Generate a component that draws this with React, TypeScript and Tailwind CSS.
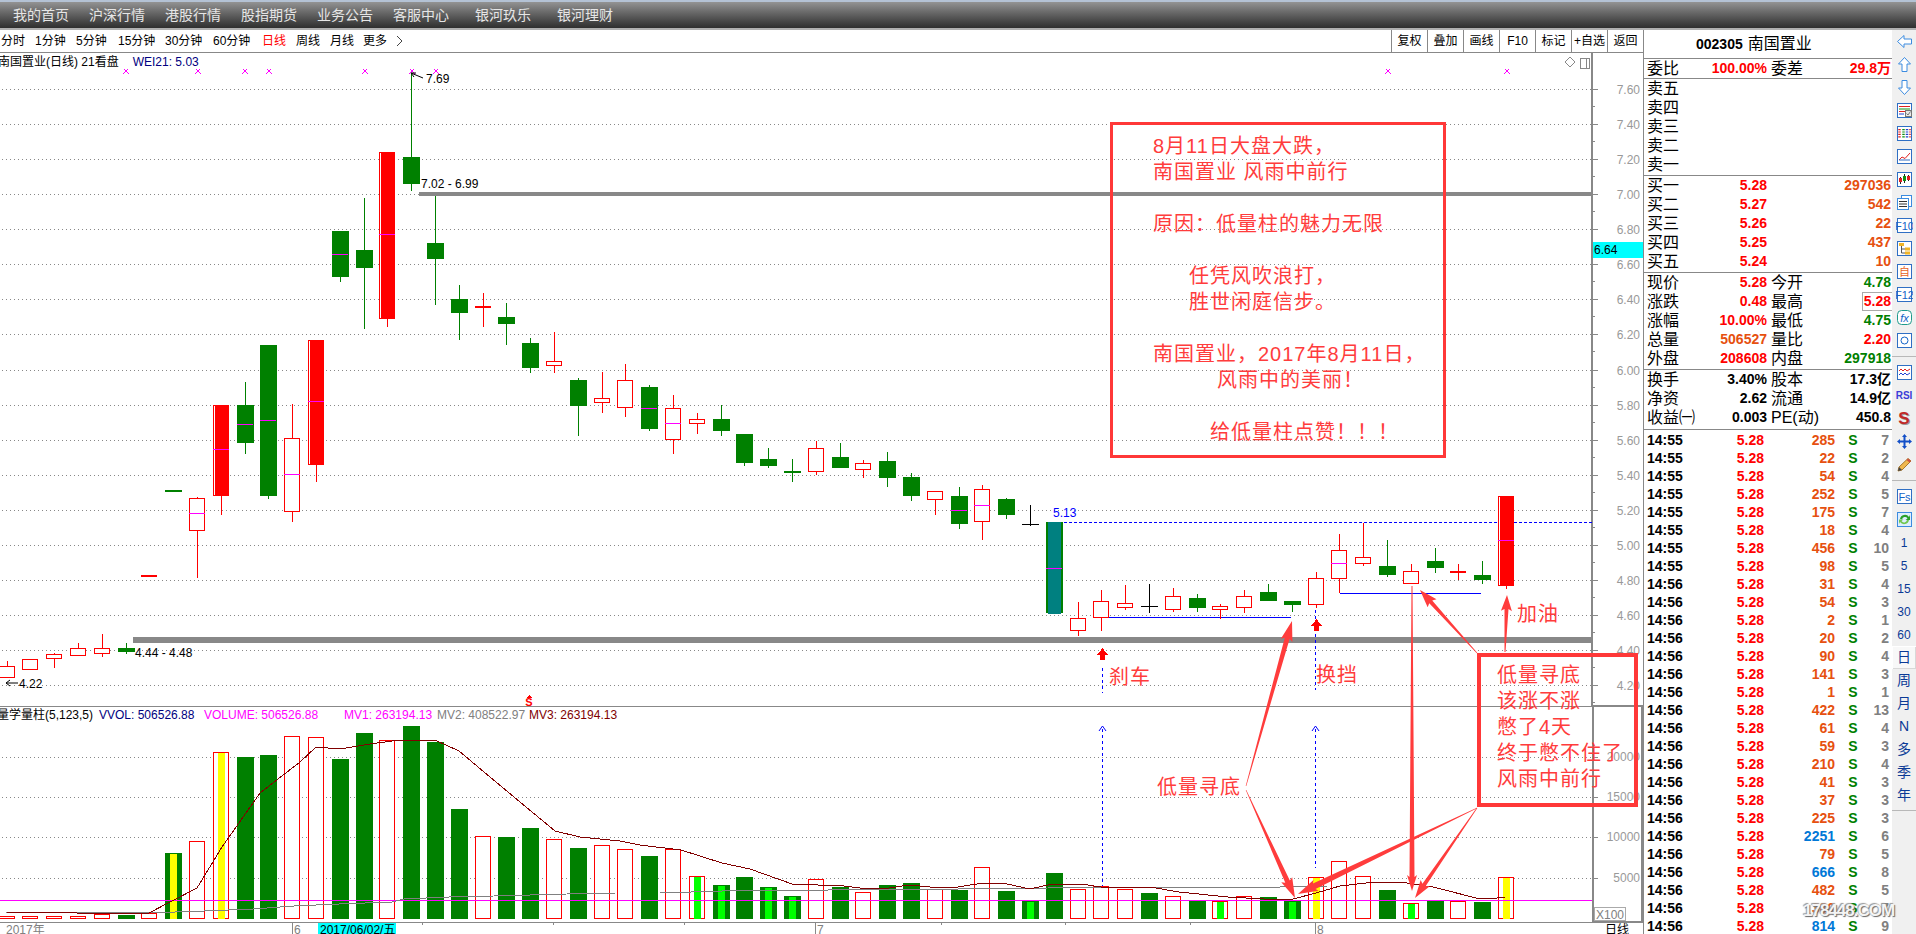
import type { ReactNode } from "react"

const RED = "#ff0000"
const GREEN = "#008000"
const NOTE = "#ff3c3c"
const STEP = 23.8

// full width punctuation of the notes
const COMMA = "\uFF0C"
const COLON = "\uFF1A"
const BANG = "\uFF01"

const centerX = (i: number) => Math.round(6.5 + STEP * i)

// type, wick top, body top, body bottom, wick bottom, magenta mid line
type Candle = [string, number, number, number, number, number?]

const candles: Candle[] = [
  ["r", 661, 666, 677, 677],
  ["r", 659, 659, 669, 670],
  ["r", 653, 654, 658, 668],
  ["r", 643, 648, 655, 656],
  ["r", 634, 648, 653, 657],
  ["g", 643, 648, 652, 654],
  ["r", 575, 575, 575, 575],
  ["g", 491, 490, 491, 491],
  ["r", 497, 498, 530, 578, 513],
  ["R", 405, 405, 495, 515, 449],
  ["g", 382, 405, 443, 454, 424],
  ["g", 345, 345, 496, 499, 420],
  ["r", 404, 438, 511, 522, 474],
  ["R", 340, 340, 464, 482, 401],
  ["g", 231, 231, 277, 282, 254],
  ["g", 198, 250, 268, 329],
  ["R", 152, 152, 318, 327, 234],
  ["g", 73, 157, 184, 191],
  ["g", 196, 243, 259, 305],
  ["g", 285, 299, 313, 340],
  ["r", 293, 306, 306, 327],
  ["g", 303, 317, 324, 345],
  ["g", 338, 343, 368, 373],
  ["r", 332, 361, 365, 373],
  ["g", 378, 380, 406, 436],
  ["r", 372, 398, 402, 413],
  ["r", 364, 380, 407, 417],
  ["g", 385, 387, 429, 431, 408],
  ["r", 395, 408, 439, 454, 423],
  ["r", 413, 419, 423, 434],
  ["g", 405, 419, 431, 436],
  ["g", 434, 434, 463, 466],
  ["g", 448, 459, 466, 468],
  ["g", 459, 471, 473, 482],
  ["r", 441, 448, 471, 475],
  ["g", 443, 457, 468, 468],
  ["r", 460, 463, 469, 478],
  ["g", 452, 461, 478, 487],
  ["g", 473, 477, 496, 501],
  ["r", 491, 491, 499, 515],
  ["g", 487, 496, 524, 529, 510],
  ["r", 485, 489, 521, 540, 505],
  ["g", 498, 499, 515, 519],
  ["b", 505, 524, 524, 526],
  ["t", 522, 522, 613, 613, 568],
  ["r", 602, 618, 630, 636],
  ["r", 590, 601, 617, 631],
  ["r", 585, 603, 607, 610],
  ["b", 584, 606, 606, 613],
  ["r", 588, 596, 609, 612],
  ["g", 594, 598, 608, 612],
  ["r", 604, 606, 609, 619],
  ["r", 590, 596, 607, 613],
  ["g", 584, 592, 601, 601],
  ["g", 601, 601, 605, 612],
  ["r", 572, 578, 604, 608],
  ["r", 534, 550, 578, 593, 563],
  ["r", 523, 557, 563, 566],
  ["g", 540, 566, 575, 577],
  ["r", 564, 571, 583, 584],
  ["g", 548, 561, 568, 573],
  ["r", 564, 571, 571, 580],
  ["g", 561, 575, 580, 584],
  ["R", 496, 496, 585, 589, 540],
]

// type (r hollow, g green), top of the bar, colour of the inner stripe
type Bar = [string, number, string?]

const bars: Bar[] = [
  ["r", 916], ["r", 916], ["r", 916], ["r", 916], ["r", 914], ["g", 915],
  ["r", 913], ["g", 853, "#ffff00"], ["r", 841], ["r", 752, "#ffff00"], ["g", 757], ["g", 755],
  ["r", 736], ["r", 737], ["g", 759], ["g", 733], ["r", 740], ["g", 726],
  ["g", 742], ["g", 809], ["r", 836], ["g", 837], ["g", 828], ["r", 839],
  ["g", 848], ["r", 845], ["r", 849], ["g", 856], ["r", 849], ["r", 876, "#00ff00"],
  ["g", 885, "#00ff00"], ["g", 877], ["g", 887, "#00ff00"], ["g", 896, "#00ff00"], ["r", 879], ["g", 887],
  ["r", 892], ["g", 885], ["g", 883], ["r", 889], ["g", 890], ["r", 867],
  ["g", 891], ["g", 901, "#00ff00"], ["g", 873], ["r", 889], ["r", 886], ["r", 889],
  ["g", 893], ["r", 896], ["g", 901], ["r", 901, "#00ff00"], ["r", 896], ["g", 897],
  ["g", 901, "#00ff00"], ["r", 877, "#ffff00"], ["r", 861], ["r", 876], ["g", 890], ["r", 903, "#00ff00"],
  ["g", 901], ["r", 901], ["g", 902], ["r", 877, "#ffff00"],
]

const mv3 =
  "6,912 147,914 197,888 222,847 260,793 300,762 316,747 340,749 370,744 400,740 435,740 459,751 490,777 520,802 555,831 580,837 620,841 640,845 681,850 722,863 750,869 792,884 844,886 860,888 889,888 909,885 930,887 958,887 983,883 1007,884 1030,889 1052,884 1081,884 1101,887 1130,888 1150,887 1179,892 1228,897 1264,899 1293,899 1316,893 1340,886 1375,882 1400,882 1433,887 1480,899 1497,898 1505,897"
const mv2 =
  "6,912 147,913 204,911 253,909 294,906 339,904 392,902 404,899 449,897 494,896 567,894 616,893 660,893 722,891 828,890 958,889 1048,888 1162,887 1280,887 1328,886 1505,886"

const priceGrid = [89, 124, 159, 194, 229, 264, 299, 334, 370, 405, 440, 475, 510, 545, 580, 615, 650, 685]
const priceLabels = ["7.60", "7.40", "7.20", "7.00", "6.80", "6.60", "6.40", "6.20", "6.00", "5.80", "5.60", "5.40", "5.20", "5.00", "4.80", "4.60", "4.40", "4.20"]
const marks = [126, 198, 245, 269, 365, 412, 436, 1388, 1507]

function arrowPoints(x1: number, y1: number, x2: number, y2: number, w0 = 0.6, w1 = 4, headW = 12, headL = 16) {
  const len = Math.hypot(x2 - x1, y2 - y1)
  const ux = (x2 - x1) / len
  const uy = (y2 - y1) / len
  const nx = -uy
  const ny = ux
  const bx = x2 - ux * headL
  const by = y2 - uy * headL
  const p = (x: number, y: number, w: number) => `${x + (nx * w) / 2},${y + (ny * w) / 2}`
  return [
    p(x1, y1, w0),
    p(bx, by, w1),
    p(bx - ux * 2, by - uy * 2, headW),
    `${x2},${y2}`,
    p(bx - ux * 2, by - uy * 2, -headW),
    p(bx, by, -w1),
    p(x1, y1, -w0),
  ].join(" ")
}

function CandleMark({ c, i }: { c: Candle; i: number }) {
  const [type, wickTop, top, bottom, wickBottom, mid] = c
  const x = centerX(i)
  const h = Math.max(bottom - top, 1)
  const color = type === "g" ? GREEN : type === "b" ? "#000000" : RED
  return (
    <g>
      <rect x={x} y={wickTop} width={1} height={wickBottom - wickTop} fill={color} />
      {type === "g" && <rect x={x - 8} y={top} width={17} height={Math.max(h, 2)} fill={GREEN} />}
      {type === "b" && <rect x={x - 8} y={top} width={17} height={1} fill="#000000" />}
      {type === "t" && (
        <>
          <rect x={x - 8} y={top} width={17} height={h} fill={GREEN} />
          <rect x={x - 6} y={top} width={13} height={h + 1} fill="#008080" />
        </>
      )}
      {type === "r" &&
        (bottom === top ? (
          <rect x={x - 8} y={top} width={16} height={2} fill={RED} />
        ) : (
          <rect x={x - 7.5} y={top + 0.5} width={15} height={h} fill="#ffffff" stroke={RED} />
        ))}
      {type === "R" && (
        <>
          <rect x={x - 7.5} y={top + 0.5} width={15} height={h} fill="#ffffff" stroke={RED} />
          <rect x={x - 6} y={top} width={13} height={h} fill={RED} />
        </>
      )}
      {mid && <rect x={x - 8} y={mid} width={16} height={1} fill="#ff00ff" />}
    </g>
  )
}

function VolumeBar({ b, i }: { b: Bar; i: number }) {
  const [type, top, stripe] = b
  const x = centerX(i)
  const h = 919 - top
  return (
    <g>
      {type === "g" ? (
        <rect x={x - 8} y={top} width={17} height={h} fill={GREEN} />
      ) : (
        <rect x={x - 7.5} y={top + 0.5} width={15} height={h - 1} fill="#ffffff" stroke={RED} />
      )}
      {stripe && <rect x={x - 3} y={top + 1} width={7} height={h - 1} fill={stripe} />}
    </g>
  )
}

function Chart() {
  const gridLine = "#888888"
  return (
    <svg
      viewBox="0 53 1643 881"
      className="absolute left-0 top-0 h-[881px] w-[1643px]"
      shapeRendering="crispEdges"
    >
      {priceGrid.map((y, i) => (
        <g key={y}>
          <line x1={2} y1={y + 0.5} x2={1592} y2={y + 0.5} stroke={gridLine} strokeDasharray="1 3" />
          <rect x={1592} y={y} width={6} height={1} fill={gridLine} />
          <rect x={1592} y={y + 17} width={3} height={1} fill={gridLine} />
          <text x={1640} y={y + 5} textAnchor="end" fontSize={12} fill="#999999" shapeRendering="auto">
            {priceLabels[i]}
          </text>
        </g>
      ))}
      {[757, 797, 837, 878].map((y) => (
        <g key={y}>
          <line x1={2} y1={y + 0.5} x2={1592} y2={y + 0.5} stroke={gridLine} strokeDasharray="1 3" />
          <rect x={1594} y={y} width={4} height={1} fill={gridLine} />
        </g>
      ))}

      {/* axis frame */}
      <rect x={1591} y={53} width={2} height={653} fill={gridLine} />
      <rect x={0} y={706} width={1592} height={1} fill={gridLine} />
      <rect x={0} y={922} width={1592} height={1} fill={gridLine} />
      <rect x={1593} y={706} width={49} height={216} fill="none" stroke={gridLine} strokeWidth={2} />

      <rect x={1593} y={242} width={50} height={16} fill="#00ffff" />
      <text x={1594} y={254} fontSize={12} fill="#000000">6.64</text>

      <text x={1640} y={761} textAnchor="end" fontSize={12} fill="#999999">20000</text>
      <text x={1640} y={801} textAnchor="end" fontSize={12} fill="#999999">15000</text>
      <text x={1640} y={841} textAnchor="end" fontSize={12} fill="#999999">10000</text>
      <text x={1640} y={882} textAnchor="end" fontSize={12} fill="#999999">5000</text>
      <rect x={1594.5} y={907.5} width={31} height={13} fill="#ffffff" stroke="#aaaaaa" />
      <text x={1596} y={919} fontSize={12} fill="#808080">X100</text>

      {/* thick support lines */}
      <rect x={419} y={192} width={1173} height={4} fill={gridLine} />
      <rect x={133} y={637} width={1459} height={6} fill={gridLine} />
      <line x1={1054} y1={522.5} x2={1592} y2={522.5} stroke="#0000ff" strokeDasharray="3 2" />
      <rect x={1102} y={617} width={189} height={1} fill="#0000ff" />
      <rect x={1340} y={593} width={141} height={1} fill="#0000ff" />

      {candles.map((c, i) => (
        <CandleMark key={i} c={c} i={i} />
      ))}

      {marks.map((x) => (
        <g key={x} stroke="#ff00ff" strokeWidth={1.4}>
          <line x1={x - 2} y1={69} x2={x + 3} y2={74} />
          <line x1={x + 2} y1={69} x2={x - 3} y2={74} />
        </g>
      ))}

      {/* price labels on the candles */}
      <g shapeRendering="auto" fontSize={12} fill="#000000">
        <path d="M411 73 L423 78 M411 73 l5 0 M411 73 l3 4" stroke="#000000" fill="none" />
        <text x={426} y={83}>7.69</text>
        <text x={421} y={188}>7.02 - 6.99</text>
        <text x={135} y={657}>4.44 - 4.48</text>
        <path d="M6 683 H18 M6 683 l4 -3 M6 683 l4 3" stroke="#000000" fill="none" />
        <text x={19} y={688}>4.22</text>
        <text x={1053} y={517} fill="#0000ff">5.13</text>
      </g>

      {/* chart corner buttons */}
      <path d="M1570 57 L1575 62 L1570 67 L1565 62 Z" fill="none" stroke="#888888" shapeRendering="auto" />
      <rect x={1580.5} y={58.5} width={9} height={10} fill="none" stroke="#888888" />
      <rect x={1586} y={59} width={1} height={9} fill="#888888" />

      {/* sell mark */}
      <path d="M529 695 L532 698 H526 Z" fill={RED} />
      <text x={529} y={706} textAnchor="middle" fontSize={11} fontWeight={700} fill={RED} shapeRendering="auto">
        S
      </text>

      {/* volume */}
      {bars.map((b, i) => (
        <VolumeBar key={i} b={b} i={i} />
      ))}
      <rect x={0} y={900} width={1592} height={1} fill="#ff00ff" />
      <g fill="none" strokeWidth={1}>
        <polyline points={mv2} stroke="#808080" />
        <polyline points={mv3} stroke="#800000" />
      </g>

      {/* signals */}
      <g stroke="#0000ff" strokeDasharray="3 3">
        <line x1={1102.5} y1={668} x2={1102.5} y2={693} />
        <line x1={1102.5} y1={729} x2={1102.5} y2={886} />
        <line x1={1315.5} y1={610} x2={1315.5} y2={690} />
        <line x1={1315.5} y1={729} x2={1315.5} y2={868} />
      </g>
      <g stroke="#0000ff" fill="none" shapeRendering="auto">
        <path d="M1099 731 L1102.5 726 L1106 731" />
        <path d="M1312 731 L1315.5 726 L1319 731" />
      </g>
      <path d="M1102.5 648 L1108 655 H1105 V660 H1100 V655 H1097 Z" fill={RED} />
      <path d="M1316.5 619 L1322 626 H1319 V631 H1314 V626 H1311 Z" fill={RED} />

      {/* date axis */}
      {[422, 553, 684, 941, 1065, 1190].map((x) => (
        <rect key={x} x={x} y={922} width={1} height={3} fill={gridLine} />
      ))}
      <rect x={292} y={922} width={1} height={12} fill={gridLine} />
      <rect x={815} y={922} width={1} height={12} fill={gridLine} />
      <rect x={1315} y={922} width={1} height={12} fill={gridLine} />
      <rect x={318} y={923} width={78} height={11} fill="#00ffff" />
      <g fontSize={12} shapeRendering="auto">
        <text x={6} y={934} fill="#808080">2017年</text>
        <text x={294} y={934} fill="#808080">6</text>
        <text x={817} y={934} fill="#808080">7</text>
        <text x={1317} y={934} fill="#808080">8</text>
        <text x={320} y={934} fill="#000000">2017/06/02/五</text>
        <text x={1617} y={934} textAnchor="middle" fill="#000000">日线</text>
      </g>
    </svg>
  )
}

function NoteArrows() {
  const arrows = [
    arrowPoints(1246, 786, 1292, 621, 0.6, 5, 12, 18),
    arrowPoints(1246, 790, 1295, 898, 0.6, 5, 12, 18),
    arrowPoints(1477, 808, 1298, 894, 0.6, 6, 12, 18),
    arrowPoints(1477, 808, 1415, 898, 0.6, 4, 11, 16),
    arrowPoints(1412, 586, 1412, 891, 1, 5, 10, 14),
    arrowPoints(1477, 653, 1420, 590, 0.6, 4, 12, 16),
    arrowPoints(1505, 652, 1507, 595, 1, 4, 11, 14),
  ]
  return (
    <svg viewBox="0 30 1643 904" className="absolute left-0 top-0 h-[904px] w-[1643px]">
      {arrows.map((points) => (
        <polygon key={points} points={points} fill={NOTE} />
      ))}
    </svg>
  )
}

function Toolbar() {
  const periods: [string, string][] = [
    ["分时", "w-[34px]"],
    ["1分钟", "w-[41px]"],
    ["5分钟", "w-[42px]"],
    ["15分钟", "w-[47px]"],
    ["30分钟", "w-[48px]"],
    ["60分钟", "w-[49px]"],
    ["日线", "w-[34px] text-[#ff0000]"],
    ["周线", "w-[34px]"],
    ["月线", "w-[33px]"],
    ["更多", "w-[33px]"],
  ]
  return (
    <div className="flex h-[23px] items-center justify-between border-b border-[#888888] bg-white text-[12px] text-black">
      <div className="flex items-center pl-px">
        {periods.map(([label, cls]) => (
          <span key={label} className={cls}>
            {label}
          </span>
        ))}
        <svg width="8" height="12" viewBox="0 0 8 12" className="text-[#444444]">
          <path d="M1 1 L6 6 L1 11" fill="none" stroke="currentColor" />
        </svg>
      </div>
      <div className="flex h-full">
        {["复权", "叠加", "画线", "F10", "标记", "+自选", "返回"].map((label) => (
          <span key={label} className="flex w-[36px] items-center justify-center border-l border-[#888888]">
            {label}
          </span>
        ))}
      </div>
    </div>
  )
}

function Plot() {
  return (
    <div className="relative flex flex-1 flex-col overflow-hidden">
      <Chart />
      <div className="relative flex h-[18px] w-[1592px] items-center gap-[14px] whitespace-nowrap text-[12px] text-black">
        <span className="-ml-[2px]">南国置业(日线) 21看盘</span>
        <span className="text-[#000080]">WEI21: 5.03</span>
      </div>
      <div className="relative mt-[636px] flex h-[16px] w-[1592px] items-center whitespace-nowrap text-[12px]">
        <span className="-ml-[3px] w-[102px] text-black">量学量柱(5,123,5)</span>
        <span className="w-[105px] text-[#000080]">VVOL: 506526.88</span>
        <span className="w-[140px] text-[#ff00ff]">VOLUME: 506526.88</span>
        <span className="w-[93px] text-[#ff00ff]">MV1: 263194.13</span>
        <span className="w-[92px] text-[#808080]">MV2: 408522.97</span>
        <span className="text-[#800000]">MV3: 263194.13</span>
      </div>
    </div>
  )
}

function Notes() {
  const note = "text-[20px] leading-[26px] tracking-[1px] text-[#ff3c3c]"
  return (
    <>
      <NoteArrows />
      <div className={`absolute left-[1110px] top-[92px] h-[336px] w-[336px] border-[3px] border-[#ff3838] pl-[40px] pt-[8px] ${note}`}>
        <p>{`8月11日大盘大跌${COMMA}`}</p>
        <p>南国置业 风雨中前行</p>
        <p className="mt-[26px]">{`原因${COLON}低量柱的魅力无限`}</p>
        <p className="ml-[36px] mt-[26px]">{`任凭风吹浪打${COMMA}`}</p>
        <p className="ml-[36px]">胜世闲庭信步。</p>
        <p className="mt-[26px]">{`南国置业${COMMA}2017年8月11日${COMMA}`}</p>
        <p className="ml-[64px]">{`风雨中的美丽${BANG}`}</p>
        <p className="ml-[57px] mt-[26px]">{`给低量柱点赞${BANG}${BANG}${BANG}`}</p>
      </div>
      <div className={`absolute left-[1477px] top-[623px] h-[154px] w-[161px] whitespace-nowrap border-4 border-[#ff3838] pl-[16px] pt-[5px] ${note}`}>
        <p>低量寻底</p>
        <p>该涨不涨</p>
        <p>憋了4天</p>
        <p>终于憋不住了</p>
        <p>风雨中前行</p>
      </div>
      <span className={`absolute left-[1109px] top-[634px] ${note}`}>刹车</span>
      <span className={`absolute left-[1316px] top-[632px] ${note}`}>换挡</span>
      <span className={`absolute left-[1157px] top-[744px] ${note}`}>低量寻底</span>
      <span className={`absolute left-[1517px] top-[571px] ${note}`}>加油</span>
    </>
  )
}

type RowProps = {
  l1: string
  v1?: string
  c1?: string
  l2?: string
  v2?: string
  c2?: string
  boxed?: boolean
}

function QuoteRow({ l1, v1, c1, l2, v2, c2, boxed }: RowProps) {
  return (
    <div className="flex h-[19px] items-center">
      <div className="flex w-[123px] items-center justify-between pl-[3px]">
        <span className="text-[16px] leading-[19px] text-black">{l1}</span>
        <span className={`text-[14px] font-bold ${c1 ?? ""}`}>{v1}</span>
      </div>
      {l2 && (
        <div className="ml-[4px] flex w-[120px] items-center justify-between">
          <span className="text-[16px] leading-[19px] text-black">{l2}</span>
          <span
            className={
              boxed
                ? `-mr-[2px] border border-[#aaaaaa] pl-px pr-px text-[14px] leading-[17px] font-bold ${c2 ?? ""}`
                : `text-[14px] font-bold ${c2 ?? ""}`
            }
          >
            {v2}
          </span>
        </div>
      )}
    </div>
  )
}

const red = "text-[#ff0000]"
const orange = "text-[#e6500f]"
const green = "text-[#008000]"

const trades: [number, number][] = [
  [285, 7], [22, 2], [54, 4], [252, 5], [175, 7], [18, 4], [456, 10], [98, 5],
  [31, 4], [54, 3], [2, 1], [20, 2], [90, 4], [141, 3], [1, 1], [422, 13],
  [61, 4], [59, 3], [210, 4], [41, 3], [37, 3], [225, 3], [2251, 6], [79, 5],
  [666, 8], [482, 5], [380, 7], [814, 9],
]

function QuotePanel() {
  return (
    <aside className="flex w-[249px] flex-col overflow-hidden border-l border-[#888888] bg-white text-black">
      <div className="flex h-[29px] items-center border-b border-[#888888] pl-[52px]">
        <span className="text-[14px] font-bold">002305</span>
        <span className="ml-[5px] text-[16px]">南国置业</span>
      </div>
      <div className="flex h-[20px] items-center border-b border-[#888888]">
        <QuoteRow l1="委比" v1="100.00%" c1={red} l2="委差" v2="29.8万" c2={red} />
      </div>
      <div className="h-[97px] border-b border-[#888888]">
        {["卖五", "卖四", "卖三", "卖二", "卖一"].map((l) => (
          <QuoteRow key={l} l1={l} />
        ))}
      </div>
      <div className="h-[97px] border-b border-[#888888]">
        <QuoteRow l1="买一" v1="5.28" c1={red} l2=" " v2="297036" c2={orange} />
        <QuoteRow l1="买二" v1="5.27" c1={red} l2=" " v2="542" c2={orange} />
        <QuoteRow l1="买三" v1="5.26" c1={red} l2=" " v2="22" c2={orange} />
        <QuoteRow l1="买四" v1="5.25" c1={red} l2=" " v2="437" c2={orange} />
        <QuoteRow l1="买五" v1="5.24" c1={red} l2=" " v2="10" c2={orange} />
      </div>
      <div className="h-[97px] border-b border-[#888888]">
        <QuoteRow l1="现价" v1="5.28" c1={red} l2="今开" v2="4.78" c2={green} />
        <QuoteRow l1="涨跌" v1="0.48" c1={red} l2="最高" v2="5.28" c2={red} boxed />
        <QuoteRow l1="涨幅" v1="10.00%" c1={red} l2="最低" v2="4.75" c2={green} />
        <QuoteRow l1="总量" v1="506527" c1={orange} l2="量比" v2="2.20" c2={red} />
        <QuoteRow l1="外盘" v1="208608" c1={red} l2="内盘" v2="297918" c2={green} />
      </div>
      <div className="h-[60px] border-b border-[#888888]">
        <QuoteRow l1="换手" v1="3.40%" l2="股本" v2="17.3亿" />
        <QuoteRow l1="净资" v1="2.62" l2="流通" v2="14.9亿" />
        <QuoteRow l1="收益㈠" v1="0.003" l2="PE(动)" v2="450.8" />
      </div>
      <div className="text-[14px] font-bold">
        {trades.map(([vol, count], i) => (
          <div key={i} className="grid h-[18px] grid-cols-[120px_71px_36px_18px] items-center">
            <div className="flex justify-between pl-[3px]">
              <span>{i < 8 ? "14:55" : "14:56"}</span>
              <span className={red}>5.28</span>
            </div>
            <span className={`text-right ${vol === 2251 || vol === 666 || vol === 814 ? "text-[#0078d7]" : orange}`}>
              {vol}
            </span>
            <span className={`text-center ${green}`}>S</span>
            <span className="text-right text-[#808080]">{count}</span>
          </div>
        ))}
      </div>
    </aside>
  )
}

function ToolIcon({ children }: { children: ReactNode }) {
  return (
    <div className="flex h-[23px] items-center justify-center">
      <svg width="17" height="17" viewBox="0 0 17 17">
        {children}
      </svg>
    </div>
  )
}

const frame = <rect x="1.5" y="1.5" width="14" height="14" fill="#ffffff" stroke="#2f6fc4" />

function TextBoxIcon({ label, color = "#1464c8" }: { label: string; color?: string }) {
  return (
    <ToolIcon>
      {frame}
      <text x="8.5" y="13" textAnchor="middle" fontSize="11" fill={color}>
        {label}
      </text>
    </ToolIcon>
  )
}

function Divider() {
  return (
    <div className="flex h-[9px] items-center">
      <div className="h-px w-full bg-[#b8b8b8]" />
    </div>
  )
}

function ToolStrip() {
  return (
    <nav className="flex w-[24px] flex-col bg-[#f0f0f0] text-[12px] text-[#0a3a96]">
      <ToolIcon>
        <path d="M1.5 8.5 L8 2.5 V6 H15.5 V11 H8 V14.5 Z" fill="#ffffff" stroke="#3c8ce0" />
      </ToolIcon>
      <ToolIcon>
        <path d="M8.5 1.5 L14.5 8 H11 V15.5 H6 V8 H2.5 Z" fill="#ffffff" stroke="#3c8ce0" />
      </ToolIcon>
      <ToolIcon>
        <path d="M8.5 15.5 L14.5 9 H11 V1.5 H6 V9 H2.5 Z" fill="#ffffff" stroke="#3c8ce0" />
      </ToolIcon>
      <ToolIcon>
        {frame}
        <path d="M3 4.5 H14" stroke="#e02020" />
        <path d="M3 7 H14" stroke="#109010" />
        <path d="M3 9.5 H9" stroke="#e02020" />
        <path d="M3 12 H8" stroke="#2040d0" />
        <rect x="9.5" y="8.5" width="6" height="6" fill="#e8e8e8" stroke="#777777" />
        <path d="M10.5 11.5 L12 13 L14.5 9.5" fill="none" stroke="#777777" />
      </ToolIcon>
      <ToolIcon>
        {frame}
        <path d="M3.5 4 V13.5" stroke="#e02020" strokeWidth="2.5" strokeDasharray="1.2 1.2" />
        <path d="M7.5 4 V13.5" stroke="#109010" strokeWidth="2.5" strokeDasharray="1.2 1.2" />
        <path d="M11 4 V13.5" stroke="#2040d0" strokeWidth="2.5" strokeDasharray="1.2 1.2" />
        <path d="M14 4 V13.5" stroke="#e02020" strokeWidth="1.5" strokeDasharray="1.2 1.2" />
      </ToolIcon>
      <ToolIcon>
        {frame}
        <path d="M3 12 L6 9 L9 10.5 L14 5" fill="none" stroke="#e02020" />
        <path d="M3 12 H14" stroke="#2f6fc4" />
      </ToolIcon>
      <ToolIcon>
        {frame}
        <path d="M4.5 6 V13 M8.5 3 V12 M12.5 4 V10" stroke="#222222" />
        <rect x="3" y="7" width="3" height="4" fill="#e02020" />
        <rect x="7" y="5" width="3" height="5" fill="#109010" />
        <rect x="11" y="5" width="3" height="4" fill="#e02020" />
      </ToolIcon>
      <ToolIcon>
        <rect x="5.5" y="1.5" width="10" height="11" fill="#ffffff" stroke="#3c8ce0" />
        <rect x="1.5" y="4.5" width="11" height="11" fill="#ffffff" stroke="#3c8ce0" />
        <path d="M3 7.5 H11 M3 10 H11 M3 12.5 H11" stroke="#333333" />
      </ToolIcon>
      <TextBoxIcon label="F10" />
      <ToolIcon>
        {frame}
        <rect x="3" y="3" width="5" height="3" fill="#f0b428" />
        <rect x="9" y="7.5" width="5" height="3" fill="#f0b428" />
        <rect x="9" y="11.5" width="5" height="3" fill="#f0b428" />
        <path d="M5.5 6 V13 H9 M5.5 9 H9" fill="none" stroke="#555555" />
      </ToolIcon>
      <TextBoxIcon label="自" color="#e8641e" />
      <TextBoxIcon label="F12" />
      <ToolIcon>
        <rect x="1.5" y="1.5" width="14" height="14" rx="4" fill="#ffffff" stroke="#1f9a8c" />
        <text x="8.5" y="12.5" textAnchor="middle" fontSize="11" fontStyle="italic" fill="#1464c8">
          fx
        </text>
      </ToolIcon>
      <ToolIcon>
        {frame}
        <circle cx="8.5" cy="8.5" r="3.5" fill="none" stroke="#1464c8" />
      </ToolIcon>
      <Divider />
      <ToolIcon>
        {frame}
        <path d="M3 7 l2 -2 l2 2 l2 -2 l2 2 l3 -2" fill="none" stroke="#e02020" />
        <path d="M3 11 l2 -2 l2 2 l2 -2 l2 2 l3 -2" fill="none" stroke="#2040d0" />
      </ToolIcon>
      <div className="flex h-[23px] items-center justify-center text-[10px] font-bold text-[#3c3cd8]">RSI</div>
      <div className="flex h-[23px] items-center justify-center text-[17px] font-bold text-[#c02828] [text-shadow:1px_1px_0_#999999]">
        S
      </div>
      <ToolIcon>
        <path d="M8.5 1 L11 4 H9.5 V7.5 H13 V6 L16 8.5 L13 11 V9.5 H9.5 V13 H11 L8.5 16 L6 13 H7.5 V9.5 H4 V11 L1 8.5 L4 6 V7.5 H7.5 V4 H6 Z" fill="#1450c8" />
      </ToolIcon>
      <ToolIcon>
        <path d="M2 15 L3 11 L12 2.5 L15 5 L6 14 Z" fill="#f0b850" stroke="#a87830" />
        <path d="M2 15 L3 11 L6 14 Z" fill="#444444" />
        <path d="M12 2.5 L15 5 L13.5 6.5 L10.5 4 Z" fill="#d05040" />
      </ToolIcon>
      <Divider />
      <TextBoxIcon label="Fs" />
      <ToolIcon>
        <rect x="1.5" y="1.5" width="14" height="14" fill="#ddeeff" stroke="#3c8ce0" />
        <path d="M4 8 A5 5 0 0 1 13 6 L14 4 V9 H9.5 L11.5 7.5 A3 3 0 0 0 6 8.5 Z" fill="#28a028" />
        <path d="M13 9 A5 5 0 0 1 4 11 L3 13 V8.5 H7.5 L5.5 10 A3 3 0 0 0 11 9 Z" fill="#70c850" />
      </ToolIcon>
      {["1", "5", "15", "30", "60"].map((t) => (
        <div key={t} className="flex h-[23px] items-center justify-center">
          {t}
        </div>
      ))}
      <div className="flex h-[23px] items-center justify-center bg-[#f8f8f8] text-[14px] shadow-[inset_1px_1px_0_#ffffff,inset_-1px_-1px_0_#d8d8d8]">
        日
      </div>
      {["周", "月", "N", "多", "季", "年"].map((t) => (
        <div key={t} className="flex h-[23px] items-center justify-center text-[14px]">
          {t}
        </div>
      ))}
      <div className="mt-[3px] h-px bg-[#b8b8b8]" />
    </nav>
  )
}

const navItems = ["我的首页", "沪深行情", "港股行情", "股指期货", "业务公告", "客服中心"]

export default function App() {
  return (
    <div className="relative flex h-[934px] w-[1916px] flex-col overflow-hidden bg-white font-['Liberation_Sans','Noto_Sans_CJK_SC',sans-serif]">
      <header className="flex h-[30px] items-center border-t-2 border-b-2 border-t-[#b4c2d4] border-b-[#b0b0b0] bg-gradient-to-b from-[#939393] to-[#2f2f2f] pl-[13px] text-[14px] text-[#e6e6e6]">
        <div className="flex gap-[20px]">
          {navItems.map((item) => (
            <span key={item}>{item}</span>
          ))}
        </div>
        <span className="ml-[26px]">银河玖乐</span>
        <span className="ml-[26px]">银河理财</span>
      </header>
      <div className="flex flex-1">
        <main className="relative flex w-[1643px] flex-col">
          <Toolbar />
          <Plot />
          <Notes />
        </main>
        <QuotePanel />
        <ToolStrip />
      </div>
      <span className="absolute left-[1803px] top-[898px] text-[17px] font-bold tracking-[-1px] text-[#f4f4f4] [text-shadow:1px_1px_1px_#666666,-1px_-1px_1px_#999999]">
        178448.COM
      </span>
    </div>
  )
}
